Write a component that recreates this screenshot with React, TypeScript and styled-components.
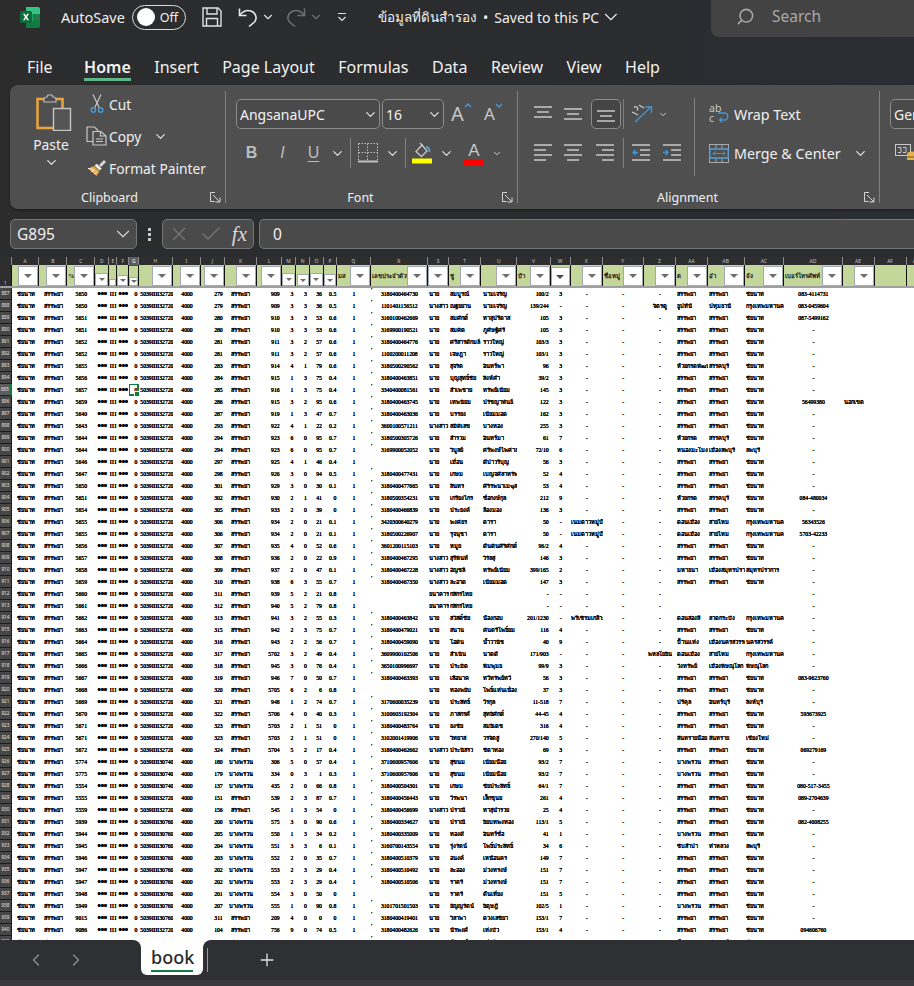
import React from 'react';
import styled, { createGlobalStyle } from 'styled-components';
import { ChevronDown, ChevronLeft, ChevronRight, Plus, Search, X, Check } from 'lucide-react';

const GlobalStyle = createGlobalStyle`
  html, body { margin: 0; padding: 0; background: #2b2c2e; }
  * { box-sizing: border-box; }
`;

const UI_FONT = '"Noto Sans", "Open Sans", sans-serif';
const SHEET_FONT = '"Liberation Serif", "Noto Sans", serif';

const Window = styled.div`
  width: 914px;
  height: 986px;
  display: flex;
  flex-direction: column;
  overflow: hidden;
  font-family: ${UI_FONT};
  color: #f0f0f0;
  background: linear-gradient(90deg, #2c2c2d 0%, #2b2c2f 60%, #2a2d34 100%);
`;

/* title bar */
const TitleBar = styled.div`
  height: 37px;
  flex: none;
  display: flex;
  align-items: center;
  padding: 0 0 3px 20px;
`;

const AutoSave = styled.span`
  margin-left: 21px;
  font-size: 14.5px;
  width: 71px;
`;

const Toggle = styled.div`
  width: 54px;
  height: 25px;
  border: 1.5px solid #d8d8d8;
  border-radius: 13px;
  display: flex;
  align-items: center;
  padding: 0 7px 0 4px;
  justify-content: space-between;
  font-size: 12.5px;
  margin-right: 16px;
  &::before {
    content: '';
    width: 18px;
    height: 18px;
    border-radius: 50%;
    background: #fff;
  }
`;

const QatIcon = styled.div<{ $gap: number }>`
  display: flex;
  margin-right: ${(p) => p.$gap}px;
`;

const DocTitle = styled.div`
  display: flex;
  align-items: center;
  font-size: 14px;
  width: 244px;
  white-space: nowrap;
`;

const DocName = styled.span`
  font-size: 13.5px;
  margin-right: 6px;
`;

const DocSaved = styled.span`
  margin: 0 1px 0 6px;
`;

const SearchBox = styled.div`
  margin: 0 0 -3px 89px;
  flex: 1;
  align-self: stretch;
  background: #434343;
  border-bottom-left-radius: 8px;
  display: flex;
  align-items: center;
  padding: 0 0 5px 25px;
  gap: 17px;
  color: #a8a8a8;
  font-size: 15.5px;
`;

const SearchGlyph = styled(Search)`
  transform: scaleX(-1);
`;

/* ribbon tabs */
const TabStrip = styled.div`
  height: 48px;
  flex: none;
  display: flex;
  align-items: flex-start;
  padding: 18px 0 0 27px;
  gap: 23.5px;
`;

const TabLabel = styled.div<{ $active?: boolean; $after?: number }>`
  position: relative;
  font-size: 16px;
  line-height: 24px;
  font-weight: ${(p) => (p.$active ? 600 : 400)};
  color: #f2f2f2;
  white-space: nowrap;
  margin-right: ${(p) => p.$after ?? 0}px;
  ${(p) => p.$active && `
    &::after {
      content: '';
      position: absolute;
      left: 0;
      right: 0;
      top: 23px;
      height: 2.5px;
      background: #5fb585;
    }
  `}
`;

/* ribbon */
const Ribbon = styled.div`
  height: 124px;
  flex: none;
  margin-left: 10px;
  background: #4f4f4f;
  border-radius: 8px 0 0 8px;
  box-shadow: 0 1px 3px rgba(0, 0, 0, 0.4);
  display: flex;
  overflow: hidden;
  padding: 6px 0 6px;
`;

const Group = styled.div<{ $w: number; $pad: number }>`
  width: ${(p) => p.$w}px;
  flex: none;
  display: flex;
  flex-direction: column;
  padding-left: ${(p) => p.$pad}px;
  border-right: 1px solid #808080;
`;

const GroupBody = styled.div`
  flex: 1;
  min-height: 0;
  display: flex;
`;

const GroupFooter = styled.div<{ $pad: number }>`
  height: 14px;
  margin-left: ${(p) => -p.$pad}px;
  display: grid;
  grid-template-columns: 1fr auto 1fr 18px;
  align-items: center;
  font-size: 12.5px;
  color: #f0f0f0;
  padding-right: 4px;
`;

const Launcher = styled.svg`
  justify-self: end;
  width: 11px;
  height: 11px;
  grid-column: 4;
`;

const GroupName = styled.span`
  grid-column: 2;
`;

const PasteColumn = styled.div`
  width: 58px;
  margin-left: 12px;
  display: flex;
  flex-direction: column;
  align-items: center;
  padding-top: 2px;
  font-size: 13.8px;
  & > svg:first-child {
    margin-left: 5px;
  }
`;

const PasteLabel = styled.span`
  margin-top: 4px;
  line-height: 20px;
`;

const ClipboardList = styled.div`
  display: flex;
  flex-direction: column;
  margin: -3px 0 0 4px;
`;

const ClipRow = styled.div`
  height: 32px;
  display: flex;
  align-items: center;
  font-size: 13.8px;
  white-space: nowrap;
`;

const ClipIcon = styled.div`
  width: 25px;
  display: flex;
  justify-content: center;
`;

const ChevGap = styled.span`
  width: 12px;
`;

const Stack = styled.div`
  display: flex;
  flex-direction: column;
  padding-top: 8px;
  gap: 9px;
`;

const ToolRow = styled.div<{ $ml?: number }>`
  height: 30px;
  display: flex;
  align-items: center;
  margin-left: ${(p) => p.$ml ?? 0}px;
`;

const SelectBox = styled.div<{ $w: number; $ml?: number }>`
  width: ${(p) => p.$w}px;
  margin-left: ${(p) => p.$ml ?? 0}px;
  height: 30px;
  flex: none;
  border: 1px solid #8c8c8c;
  border-radius: 5px;
  background: #4a4a4a;
  display: flex;
  align-items: center;
  justify-content: space-between;
  padding: 0 1px 0 3px;
  font-size: 14px;
  color: #f2f2f2;
`;

const GrowFont = styled.div<{ $ml: number; $size: number }>`
  margin-left: ${(p) => p.$ml}px;
  width: 24px;
  display: flex;
  align-items: flex-start;
  font-size: ${(p) => p.$size}px;
  line-height: 22px;
  color: #c8c8c8;
`;

const IconSlot = styled.div<{ $w: number; $boxed?: boolean; $ml?: number }>`
  width: ${(p) => p.$w}px;
  margin-left: ${(p) => p.$ml ?? 0}px;
  height: 30px;
  flex: none;
  display: flex;
  align-items: center;
  justify-content: center;
  ${(p) => p.$boxed && `
    border: 1px solid #8c8c8c;
    border-radius: 5px;
    background: #454545;
  `}
`;

const FontLetter = styled.span<{ $style?: string }>`
  font-family: "Liberation Sans", sans-serif;
  font-size: 16px;
  color: #bdbdbd;
  font-weight: ${(p) => (p.$style === 'b' ? 700 : 400)};
  font-style: ${(p) => (p.$style === 'i' ? 'italic' : 'normal')};
  text-decoration: ${(p) => (p.$style === 'u' ? 'underline' : 'none')};
  text-underline-offset: 3px;
`;

const ToolDivider = styled.div`
  width: 1px;
  height: 30px;
  background: #808080;
  flex: none;
`;

const ColorLetter = styled.div<{ $color: string }>`
  width: 20px;
  height: 24px;
  display: flex;
  flex-direction: column;
  align-items: center;
  justify-content: flex-end;
  font-family: "Liberation Sans", sans-serif;
  font-size: 17px;
  line-height: 18px;
  color: #c8c8c8;
  border-bottom: 5px solid ${(p) => p.$color};
`;

const BigDivider = styled.div`
  width: 1px;
  height: 78px;
  margin: 7px 0 0 6px;
  background: #808080;
`;

const TextAction = styled.div`
  height: 30px;
  width: 170px;
  margin-left: 12px;
  display: flex;
  align-items: center;
  font-size: 14.3px;
  white-space: nowrap;
`;

const ActionIcon = styled.div`
  width: 27px;
  display: flex;
  padding-left: 2px;
  justify-content: flex-start;
`;

/* formula bar */
const FormulaRow = styled.div`
  height: 30px;
  flex: none;
  margin-top: 10px;
  padding-left: 10px;
  display: flex;
  align-items: stretch;
  font-size: 15.5px;
`;

const NameBox = styled.div`
  width: 127px;
  border: 1px solid #757575;
  border-radius: 5px;
  background: #4a4a4a;
  display: flex;
  align-items: center;
  justify-content: space-between;
  padding: 0 2px 0 6px;
  flex: none;
`;

const GripDots = styled.div`
  width: 25px;
  flex: none;
  display: flex;
  flex-direction: column;
  align-items: center;
  justify-content: center;
  gap: 2px;
  & > i {
    width: 3px;
    height: 3px;
    background: #c8c8c8;
  }
`;

const FxBox = styled.div`
  width: 92px;
  flex: none;
  border: 1px solid #757575;
  border-radius: 5px;
  background: #4a4a4a;
  display: flex;
  align-items: center;
  padding: 0 6px 0 5px;
  justify-content: space-between;
`;

const FxText = styled.span`
  font-family: "Liberation Serif", serif;
  font-style: italic;
  font-size: 21px;
  color: #d8d8d8;
`;

const FormulaInput = styled.div`
  flex: 1;
  margin-left: 5px;
  border: 1px solid #757575;
  border-right: 0;
  border-radius: 5px 0 0 5px;
  background: #4a4a4a;
  display: flex;
  align-items: center;
  padding-left: 13px;
`;

/* sheet */
const Sheet = styled.div`
  flex: 1;
  min-height: 0;
  padding-top: 8px;
  overflow: hidden;
  background: linear-gradient(#2b2c2f 8px, #fff 8px);
`;

const COLUMNS: { id: string; w: number; align: 'left' | 'center' | 'right'; pad?: number }[] = [
  { id: 'A', w: 27.6, align: 'left', pad: 5 },
  { id: 'B', w: 28, align: 'center' },
  { id: 'C', w: 28, align: 'center' },
  { id: 'D', w: 14, align: 'center' },
  { id: 'E', w: 8, align: 'center' },
  { id: 'F', w: 12, align: 'center' },
  { id: 'G', w: 10, align: 'right', pad: 2 },
  { id: 'H', w: 33.4, align: 'left', pad: 1 },
  { id: 'I', w: 28.6, align: 'center' },
  { id: 'J', w: 23.4, align: 'right', pad: 2 },
  { id: 'K', w: 32.6, align: 'center' },
  { id: 'L', w: 24.4, align: 'right', pad: 2 },
  { id: 'M', w: 14.6, align: 'right', pad: 3 },
  { id: 'N', w: 13.7, align: 'right', pad: 3 },
  { id: 'O', w: 14, align: 'right', pad: 2 },
  { id: 'P', w: 13.3, align: 'right', pad: 1 },
  { id: 'Q', w: 33.4, align: 'center' },
  { id: 'R', w: 57.6, align: 'center' },
  { id: 'S', w: 21, align: 'left', pad: 1 },
  { id: 'T', w: 32, align: 'left', pad: 1 },
  { id: 'U', w: 36, align: 'left', pad: 2 },
  { id: 'V', w: 33.4, align: 'right', pad: 2 },
  { id: 'W', w: 20, align: 'center' },
  { id: 'X', w: 32, align: 'center' },
  { id: 'Y', w: 41.3, align: 'center' },
  { id: 'Z', w: 32, align: 'center' },
  { id: 'AA', w: 32, align: 'left', pad: 1 },
  { id: 'AB', w: 36.7, align: 'left', pad: 1 },
  { id: 'AC', w: 39.6, align: 'left', pad: 1 },
  { id: 'AD', w: 58.4, align: 'center' },
  { id: 'AE', w: 32, align: 'left', pad: 1 },
  { id: 'AF', w: 32, align: 'left' },
  { id: 'AG', w: 20, align: 'left' },
];

const GRID = `11.7px ${COLUMNS.map((c) => `${c.w}px`).join(' ')}`;

const LetterRow = styled.div`
  display: grid;
  grid-template-columns: ${GRID};
  height: 8px;
  background: #2e2e2e;
  font-family: ${UI_FONT};
`;

const Letter = styled.div<{ $active?: boolean }>`
  font-size: 5px;
  line-height: 8px;
  text-align: center;
  color: ${(p) => (p.$active ? '#fff' : '#c4c4c4')};
  background: ${(p) => (p.$active ? '#5c5c5c' : 'transparent')};
  border-right: 1px solid #8a8a8a;
  border-bottom: ${(p) => (p.$active ? '1.5px solid #107c41' : '0')};
`;

const FilterRow = styled.div`
  display: grid;
  grid-template-columns: ${GRID};
  height: 23px;
  background: #c4d79b;
  border-bottom: 2px solid #a0a0a0;
`;

const Corner = styled.div`
  background: #2e2e2e;
  color: #ddd;
  font-size: 4.5px;
  font-family: ${UI_FONT};
  display: flex;
  align-items: flex-end;
  justify-content: center;
  border-right: 1px solid #111;
`;

const FilterCell = styled.div`
  position: relative;
  display: flex;
  align-items: flex-end;
  justify-content: flex-end;
  overflow: hidden;
  border-right: 1px solid #111;
`;

const FilterLabel = styled.span`
  flex: 1;
  align-self: center;
  font-family: ${SHEET_FONT};
  font-size: 6px;
  font-weight: 700;
  color: #111;
  white-space: nowrap;
  overflow: hidden;
  padding-left: 1px;
`;

const FilterButton = styled.div<{ $size: number; $dark?: boolean }>`
  width: ${(p) => p.$size}px;
  height: ${(p) => p.$size}px;
  flex: none;
  background: #fdfdfd;
  border: 1.5px solid #a4a9b0;
  display: flex;
  align-items: center;
  justify-content: center;
  &::before {
    content: '';
    display: ${(p) => (p.$size < 9 ? 'none' : 'block')};
    border-left: ${(p) => (p.$size > 16 ? 4.5 : 3.5)}px solid transparent;
    border-right: ${(p) => (p.$size > 16 ? 4.5 : 3.5)}px solid transparent;
    border-top: ${(p) => (p.$size > 16 ? 4 : 3)}px solid ${(p) => (p.$dark ? '#4a4a4a' : '#6d6d6d')};
  }
`;

const DataRow = styled.div`
  display: grid;
  grid-template-columns: ${GRID};
  height: 12px;
  background: #fff;
`;

const RowHeader = styled.div<{ $active?: boolean }>`
  background: ${(p) => (p.$active ? '#5c5c5c' : '#474747')};
  color: #e8e8e8;
  font-family: ${UI_FONT};
  font-size: 4.6px;
  line-height: 11px;
  text-align: center;
  border-bottom: 1px solid #1c1c1c;
  border-right: ${(p) => (p.$active ? '2px solid #107c41' : '1px solid #1c1c1c')};
`;

const Cell = styled.div<{ $align: string; $pad: number; $warn?: boolean; $mask?: boolean; $spaced?: boolean }>`
  position: relative;
  text-align: ${(p) => p.$align};
  padding: 0 ${(p) => (p.$align === 'right' ? p.$pad : 0)}px 0 ${(p) => (p.$align === 'left' ? p.$pad : 0)}px;
  font-family: ${SHEET_FONT};
  font-size: ${(p) => (p.$mask ? 9.5 : 5.7)}px;
  font-weight: ${(p) => (p.$mask ? 700 : 400)};
  letter-spacing: ${(p) => (p.$spaced ? 0.5 : p.$mask ? -0.2 : 0)}px;
  line-height: 12px;
  color: #000;
  white-space: nowrap;
  overflow: ${(p) => (p.$warn ? 'visible' : 'hidden')};
  text-shadow: 0 0 0.5px #000, 0 0 0.5px #000;
  ${(p) => p.$warn && `
    &::before {
      content: '';
      position: absolute;
      left: 0.5px;
      top: 0;
      border-top: 2.5px solid #107c41;
      border-right: 2.5px solid transparent;
    }
  `}
`;

const Selection = styled.div`
  position: absolute;
  inset: -1px 0 0 -1px;
  border: 2px solid #107c41;
  &::after {
    content: '';
    position: absolute;
    right: -3px;
    bottom: -3px;
    width: 5px;
    height: 5px;
    background: #107c41;
    border: 1px solid #fff;
    border-width: 1px 0 0 1px;
  }
`;

/* sheet tabs */
const SheetBar = styled.div`
  height: 40px;
  flex: none;
  display: flex;
  background: linear-gradient(#fff 50%, #2f3033 50%);
`;

const BarLeft = styled.div`
  width: 141px;
  flex: none;
  background: #2f3033;
  border-top-right-radius: 8px;
  display: flex;
  align-items: center;
  padding-left: 26px;
  gap: 20px;
  color: #8f8f8f;
`;

const SheetTab = styled.div`
  width: 62px;
  flex: none;
  background: #fff;
  height: 35px;
  border-radius: 0 0 6px 6px;
  padding: 5px 10px 0;
  color: #2b2b2b;
  font-size: 18px;
  font-weight: 500;
  line-height: 24px;
  text-align: center;
  & > span {
    display: block;
    border-bottom: 2.5px solid #107c41;
    padding-bottom: 1px;
  }
`;

const BarRight = styled.div`
  flex: 1;
  background: #2f3033;
  border-top-left-radius: 8px;
  display: flex;
  align-items: center;
  padding-left: 4px;
`;

const TabSeparator = styled.div`
  width: 1px;
  height: 24px;
  background: #9a9a9a;
  margin-right: 49px;
`;

const StatusStrip = styled.div`
  height: 6px;
  flex: none;
  background: #3a3a3a;
`;

/* icons */
const Chev = ({ size = 15, color = '#e0e0e0' }: { size?: number; color?: string }) => (
  <ChevronDown size={size} color={color} strokeWidth={2} />
);

const ExcelLogo = () => (
  <svg width="20" height="21" viewBox="0 0 20 21">
    <path d="M6 0h12a2 2 0 0 1 2 2v5H6z" fill="#33c481" />
    <path d="M6 7h14v7H6z" fill="#21a366" />
    <path d="M6 14h14v5a2 2 0 0 1-2 2H6z" fill="#107c41" />
    <path d="M13 7h7v7h-7z" fill="#185c37" opacity="0.55" />
    <rect x="0" y="4" width="12" height="12" rx="1.5" fill="#0f6a3a" />
    <path d="M3 6.8h1.9L6 9l1.2-2.2H9L7 10l2 3.2H7.1L6 11l-1.2 2.2H3L5 10z" fill="#fff" />
  </svg>
);

const SaveIcon = () => (
  <svg width="20" height="20" viewBox="0 0 20 20" fill="none" stroke="#e0e0e0" strokeWidth="1.4">
    <path d="M1 1h15l3 3v15H1z" />
    <path d="M5 1v6h10V1M4.5 19v-7.5h11V19" />
  </svg>
);

const UndoIcon = ({ color }: { color: string }) => (
  <svg width="20" height="20" viewBox="0 0 20 20" fill="none" stroke={color} strokeWidth="1.6">
    <path d="M1.5 1.5v7h7" />
    <path d="M1.5 8.5C5 4 9 2.8 13 4c5 1.8 6.5 7.5 3.5 11L11 19.5" />
  </svg>
);

const RedoIcon = ({ color }: { color: string }) => (
  <svg width="20" height="20" viewBox="0 0 20 20" fill="none" stroke={color} strokeWidth="1.6">
    <path d="M18.5 1.5v7h-7" />
    <path d="M18.5 8.5C15 4 11 2.8 7 4 2 5.8.5 11.5 3.5 15L9 19.5" />
  </svg>
);

const QatMore = () => (
  <svg width="10" height="10" viewBox="0 0 10 10" fill="none" stroke="#e0e0e0" strokeWidth="1.2">
    <path d="M1 1.5h8M1.500 5L5 8.500 8.500 5" />
  </svg>
);

const PasteIcon = () => (
  <svg width="36" height="38" viewBox="0 0 36 38" fill="none">
    <rect x="1.500" y="6" width="25" height="29" stroke="#e8a33d" strokeWidth="2.6" fill="#4f4f4f" />
    <path d="M8 6c0-2 2-2 3-2 0-3 6-3 6 0 1 0 3 0 3 2v3H8z" fill="#4f4f4f" stroke="#bdbdbd" strokeWidth="1.2" />
    <rect x="17.500" y="15.500" width="17" height="22" fill="#555" stroke="#c6c6c6" strokeWidth="1.4" />
  </svg>
);

const CutIcon = () => (
  <svg width="14" height="20" viewBox="0 0 14 20" fill="none">
    <path d="M3 0.5l6.2 13M11 0.5L4.8 13.5" stroke="#cfcfcf" strokeWidth="1.1" />
    <circle cx="3.3" cy="16" r="2.2" stroke="#4a9bd6" strokeWidth="1.4" />
    <circle cx="10.7" cy="16" r="2.2" stroke="#4a9bd6" strokeWidth="1.4" />
  </svg>
);

const CopyIcon = () => (
  <svg width="21" height="20" viewBox="0 0 21 20" fill="none" stroke="#c8c8c8" strokeWidth="1.2">
    <path d="M9 15.500H1V1h7.500l3.500 3.500V6" />
    <path d="M7 5.500h8l5 4.500V19H7z" fill="#4f4f4f" />
    <path d="M14.500 5.500V10H20M10 13h7M10 15.500h7" />
  </svg>
);

const PainterIcon = () => (
  <svg width="20" height="19" viewBox="0 0 20 19" fill="none">
    <path d="M1 9.500L9.500 17l3-4.500L7 7z" fill="#e8a33d" />
    <path d="M1 9.500l6 1M4 12.500l4-1M7 15l3-2" stroke="#fff" strokeWidth="0.9" />
    <path d="M7.500 6.500l5 5 2.200-1.800-4.800-5z" fill="#f0f0f0" />
    <path d="M12 6l5-5 2 2-5 5z" fill="#d8d8d8" />
  </svg>
);

const LauncherIcon = () => (
  <Launcher viewBox="0 0 11 11" fill="none" stroke="#d8d8d8" strokeWidth="1">
    <path d="M5 .5H.5v4" />
    <path d="M.5 4.500v5h4" />
    <path d="M3 3l7 7M10 5.500V10H5.500" />
  </Launcher>
);

const BordersIcon = () => (
  <svg width="20" height="20" viewBox="0 0 20 20" fill="none" stroke="#c0c0c0">
    <path d="M.5.5h19M.5 9.500h19M.5.5v18M9.500.5v18M19.500.5v18" strokeDasharray="1.5 1.5" />
    <path d="M0 18.500h20" strokeWidth="2" />
  </svg>
);

const FillIcon = () => (
  <svg width="20" height="22" viewBox="0 0 20 22">
    <path d="M4 9.500L10 3l5 6-5.500 5.500z" fill="none" stroke="#c8c8c8" strokeWidth="1.3" />
    <path d="M8 1l3 3" stroke="#c8c8c8" strokeWidth="1.3" />
    <path d="M14 5c3 0 3.500 2 3.500 5" stroke="#5ba4d6" strokeWidth="1.8" fill="none" />
    <rect x="0" y="16.500" width="20" height="5" fill="#ffff00" />
  </svg>
);

const Lines = ({ align }: { align: 'l' | 'c' | 'r' }) => {
  const xs = (w: number) => (align === 'l' ? 0 : align === 'r' ? 18 - w : (18 - w) / 2);
  return (
    <svg width="18" height="18" viewBox="0 0 18 18" stroke="#c8c8c8" strokeWidth="1.4">
      {[18, 12, 18, 12].map((w, i) => (
        <path key={i} d={`M${xs(w)} ${1 + i * 5}h${w}`} />
      ))}
    </svg>
  );
};

const VAlign = ({ top }: { top: number }) => (
  <svg width="18" height="16" viewBox="0 0 18 16" stroke="#c8c8c8" strokeWidth="1.4">
    <path d={`M0 ${top + 1}h18M3 ${top + 6}h12M0 ${top + 11}h18`} />
  </svg>
);

const Orientation = () => (
  <svg width="22" height="20" viewBox="0 0 22 20" fill="none">
    <path d="M4 18L20 3M14 3h6.500v6" stroke="#3f96d8" strokeWidth="1.3" />
    <path d="M1 8l6 3M3 3.500c2-2 5 0 3 3M8 1l5 3" stroke="#d0d0d0" strokeWidth="1.1" />
  </svg>
);

const Indent = ({ dir }: { dir: 'in' | 'out' }) => (
  <svg width="18" height="18" viewBox="0 0 18 18" stroke="#c8c8c8" strokeWidth="1.4" fill="none">
    <path d="M0 1h18M8 6h10M8 11h10M0 16h18" />
    {dir === 'out' ? (
      <path d="M6 8.500H1M3.500 6L1 8.500 3.500 11" stroke="#3f96d8" />
    ) : (
      <path d="M0 8.500h5M2.500 6L5 8.500 2.500 11" stroke="#3f96d8" />
    )}
  </svg>
);

const WrapIcon = () => (
  <svg width="20" height="20" viewBox="0 0 20 20" fill="none">
    <path d="M9 9h6c5 0 5 7 0 7H10.500M13 13.500L10.500 16 13 18.500" stroke="#3f96d8" strokeWidth="1.3" />
    <text x="0" y="8" fontSize="10.500" fill="#c8c8c8" fontFamily="Noto Sans, sans-serif">ab</text>
    <text x="0" y="18" fontSize="10.500" fill="#c8c8c8" fontFamily="Noto Sans, sans-serif">c</text>
  </svg>
);

const MergeIcon = () => (
  <svg width="20" height="19" viewBox="0 0 20 19" fill="none">
    <rect x="0.500" y="0.500" width="19" height="18" stroke="#a8a8a8" />
    <path d="M0 5h20M0 14h20M7 0v5M13 0v5M7 14v5M13 14v5" stroke="#a8a8a8" />
    <rect x="1" y="5" width="18" height="9" stroke="#3f96d8" strokeWidth="1.3" />
    <path d="M4 9.500h12M6 7.500l-2 2 2 2M14 7.500l2 2-2 2" stroke="#3f96d8" />
  </svg>
);

const NumberIcon = () => (
  <svg width="22" height="18" viewBox="0 0 22 18" fill="none">
    <rect x="0.500" y="0.500" width="15" height="11" stroke="#c8c8c8" />
    <path d="M3 3.500h3v5H3M8 3.500h3v5H8" stroke="#c8c8c8" />
    <ellipse cx="17" cy="10" rx="5" ry="2.500" fill="#e8b04a" />
    <rect x="12" y="10" width="10" height="6" fill="#e8b04a" />
    <path d="M12 13h10" stroke="#6d5a2e" />
  </svg>
);

/* data */
const DEFAULTS = { x: '-', y: '-', z: '-', aa: 'สรรพยา', ab: 'สรรพยา', ac: 'ชัยนาท', ad: '-', ae: '' };

// C|รหัส H|J|K|L|M|N|O|P|R|S|T|U|V|W then x|y|z|aa|ab|ac|ad|ae ("" keeps the default, _ means blank)
const RAW = [
  '5650|32720|279|สรรพยา|909|3|3|36|0.5|3180400464730|นาย|สมบูรณ์|นามเจริญ|100/2|3|||||||083-4114731',
  '5650|32720|279|สรรพยา|909|3|3|36|0.5|1101401156512|นางสาว|ณฐธยาน|นามเจริญ|139/244|-|||จิตรดู|ธูปทีนี|ปทุมธานี|กรุงเทพมหานคร|083-0459604',
  '5651|32720|280|สรรพยา|910|3|3|53|0.6|3160100462669|นาย|สมศักดิ์|ทาสุปรีดาส|105|3|||||||087-5499162',
  '5651|32720|280|สรรพยา|910|3|3|53|0.6|3169900190521|นาย|สมคิด|ภูศิษฐ์ศรี|105|3',
  '5652|32720|281|สรรพยา|911|3|2|57|0.6|3180400464776|นาย|ศรีสารดีกมล์|ราวใหญ่|103/3|3',
  '5652|32720|281|สรรพยา|911|3|2|57|0.6|1100200011208|นาย|เจษฎา|ราวใหญ่|103/1|3',
  '5655|32720|283|สรรพยา|914|4|1|79|0.6|3180500290562|นาย|สุจริต|อินทร์พา|96|3||||ห้วยกรดพัฒนา|สรรคบุรี',
  '5656|32720|284|สรรพยา|915|1|3|75|0.4|3180400463851|นาย|บุญสุทธิ์ชัย|สิงห์คำ|39/2|3',
  '5657|32720|285|สรรพยา|916|1|3|75|0.4|3340400081561|นาย|สำเพชาย|ทรัพย์เนียม|145|3',
  '5659|32720|286|สรรพยา|915|3|2|95|0.6|3180400463745|นาย|เทพนิยม|ปรัชญาพันธ์|122|3|||||||56499380|นอกเขต',
  '5640|32720|287|สรรพยา|919|1|3|47|0.7|3180400463036|นาย|บรรยง|เนียมมอด|162|3',
  '5643|32720|293|สรรพยา|922|4|1|22|0.2|3600100571211|นางสาว|สมิติเลข|บางทอง|255|3',
  '5644|32720|294|สรรพยา|923|6|0|95|0.7|3180500305726|นาย|สำรวม|อินทร์มา|61|7||||ห้วยกรด|สรรคบุรี',
  '5644|32720|294|สรรพยา|923|6|0|95|0.7|3169900052052|นาย|วิบูลย์|ศรีพงษ์ไพศาล|72/10|6||||หนองมะโมง|เมืองลพบุรี|ลพบุรี',
  '5646|32720|297|สรรพยา|925|4|1|46|0.4||นาย|เมื่อน|ดีปาวรีบุญ|56|3',
  '5647|32720|298|สรรพยา|926|3|0|94|0.5|3180400477431|นาย|เกษม|เบญจศิลาทรัพย์|52|4',
  '5650|32720|301|สรรพยา|929|3|0|30|0.1|3180400477665|นาย|สินทร|ศิริรพนาเมฆุล|53|4',
  '5651|32720|302|สรรพยา|930|2|1|41|0|3180500354231|นาย|เกรียงไกร|ซื่อกงษ์กุล|212|9||||ห้วยกรด|สรรคบุรี||084-480034',
  '5654|32720|305|สรรพยา|933|2|0|39|0|3180400466839|นาย|ประยงค์|ล้องมอง|136|3',
  '5655|32720|306|สรรพยา|934|2|0|21|0.1|3420300640279|นาย|พงศธร|ดารา|50|-|เนมดาวหมู่บ้าน|||ดอนเมือง|สายไหม|กรุงเทพมหานคร|56343526',
  '5655|32720|306|สรรพยา|934|2|0|21|0.1|3180500226907|นาย|รุจนุชา|ดารา|50|-|เนมดาวหมู่บ้าน|||ดอนเมือง|สายไหม|กรุงเทพมหานคร|5703-42233',
  '5656|32720|307|สรรพยา|935|4|0|52|0.6|3601200115103|นาย|หมูย|ดีนดินศิริศักดิ์|96/2|4',
  '5657|32720|308|สรรพยา|936|2|0|22|0.9|3180400467295|นางสาว|สุรีพินท์|วิรัลสุ|146|3',
  '5658|32720|309|สรรพยา|937|2|0|47|0.1|3180400467228|นางสาว|อัญชลี|ทรัพย์เนียม|399/165|2||||มหาธนา|เมืองสมุทรปรา|สมุทรปราการ',
  '5659|32720|310|สรรพยา|938|6|3|55|0.7|3180400467350|นางสาว|ละอาด|เนียมมอด|147|3',
  '5660|32720|311|สรรพยา|939|5|2|21|0.8||ธนาคาร|กสิกรไทย|_|-|-||||_|_|_',
  '5661|32720|312|สรรพยา|940|5|2|79|0.8||ธนาคาร|กสิกรไทย|_|-|-||||_|_|_',
  '5662|32720|313|สรรพยา|941|3|2|55|0.3|3180400463842|นาย|สวัสดิ์ชัย|น้องกอบ|201/1230|-|พรีเซิรมเกล้า:|||ดอนสองสี|ลาดกระบัง|กรุงเทพมหานคร',
  '5663|32720|315|สรรพยา|942|2|3|75|0.7|3180400479021|นาย|สนาน|คันตรีโพธิ์ยม|116|4',
  '5664|32720|316|สรรพยา|943|2|2|56|0.7|3180400459090|นาย|โอดิน|น้ำวานิช|40|9||||ป้ำนแท่ง|เมืองนครสวรรค์|นครสวรรค์',
  '5665|32720|317|สรรพยา|5702|3|2|49|0.4|3609900102506|นาย|สำเนิน|นาดดี|171/903|-|||พหลโยธิน|ดอนเมือง|สายไหม|กรุงเทพมหานคร',
  '5666|32720|318|สรรพยา|945|3|0|76|0.4|3650100996697|นาย|ประมิด|พิมพุมธ|99/9|3||||วังทรัพย์|เมืองพิษณุโลก|พิษณุโลก',
  '5667|32720|319|สรรพยา|946|7|0|50|0.7|3180400463393|นาย|เสือนาค|ทวีทรัพย์ทวี|56|3|||||||083-9623760',
  '5668|32720|320|สรรพยา|5705|6|2|6|0.8||นาย|ทองพยับ|โพธิ์แท่นเนื่อง|37|3',
  '5669|32720|321|สรรพยา|948|1|2|74|0.7|3170600035239|นาย|ประสิทธิ์|วีรกุล|11-518|7||||ปรีคุล|อินทร์บุรี|สิงห์บุรี',
  '5670|32720|322|สรรพยา|5706|4|0|40|0.3|3100603192304|นาย|ภาสกรศ์|สุทธิศักดิ์|44-45|4|||||||593673925',
  '5671|32720|323|สรรพยา|5703|2|1|51|0|3180400483764|นาย|ธงชัย|สมธิเดช|316|4',
  '5671|32720|323|สรรพยา|5703|2|1|51|0|3102001419906|นาย|วิทยาส|วรจิตสู|270/140|5||||สันทรายน้อย|สันทราย|เชียงใหม่',
  '5672|32720|324|สรรพยา|5704|5|2|17|0.4|3180400462662|นางสาว|ประนิสรว|ชิดาทอง|69|3|||||||069279169',
  '5774|30740|180|บางพรวน|306|5|0|57|0.4|3710600957606|นาย|สุขนม|เนียมน้อย|93/2|7||||บางพรวน',
  '5775|30740|179|บางพรวน|334|0|3|1|0.3|3710600957606|นาย|สุขนม|เนียมน้อย|93/2|7||||บางพรวน',
  '5554|30740|137|บางพรวน|435|2|0|66|0.8|3180400504301|นาย|เกษม|ชัยประสิทธิ์|64/1|7|||||||080-517-3455',
  '5555|32720|151|สรรพยา|539|2|3|87|0.7|3180400456443|นาย|วีรพนา|เล็กชุนย|261|4|||||||089-2704639',
  '5559|32720|156|สรรพยา|545|1|3|54|0|3180400456699|นางสาว|ปราณี|ทาสุนำรวย|25|4',
  '5939|30760|200|บางพรวน|575|3|0|90|0.6|3180400334627|นาย|ปราณี|ธิยบทพงทอง|113/1|5|||||||082-4008255',
  '5944|30760|205|บางพรวน|550|1|3|34|0.2|3180400335009|นาย|ทองดี|อินทร์ชื่อ|41|1||||บางพรวน',
  '5945|30760|204|บางพรวน|551|3|3|6|0.1|3160700143554|นาย|รุ่งรัตน์|โพธิ์ประสิทธิ์|34|6||||ซับสำปา|ท่าหลวง|ลพบุรี',
  '5946|30760|203|บางพรวน|552|2|0|35|0.7|3180400510379|นาย|อนงค์|เหนือนคร|149|7',
  '5947|30760|202|บางพรวน|553|2|3|29|0.4|3180400510492|นาย|ละออง|ม่วงทรงษ์|151|7',
  '5947|30760|202|บางพรวน|553|2|3|29|0.4|3180400510506|นาย|ราตรี|ม่วงทรงษ์|151|7',
  '5948|30760|201|บางพรวน|554|3|0|50|0||นาย|ราตรี|ต้นเที่ยง|151|5',
  '5949|30760|207|บางพรวน|555|1|0|90|0.8|3101701501503|นาย|ธัญญรัตน์|ธิดุษฎี|102/5|1||||บางพรวน',
  '9015|30760|311|สรรพยา|209|4|0|0|0|3180400419401|นาย|วิลาพา|ดวงเลขิยา|153/1|7',
  '9086|32720|104|สรรพยา|756|9|0|74|0.5|3180400482626|นาย|นีรพงศ์|เท่งบัว|153/1|4|||||||094606760',
  '9087|32720|105|สรรพยา|757|9|0|74|0.5|3180400482634|นาย|นีรพงศ์|เท่งบัว|153/1|4||||ห้วยกรด|สรรคบุรี',
];

const rowCells = (line: string): string[] => {
  const p = line.split('|');
  const pick = (i: number, fallback: string) => {
    const v = p[i];
    if (v === '_') return '';
    return v ? v : fallback;
  };
  return [
    'ชัยนาท', 'สรรพยา', p[0], '•••', 'III', '•••', '0', `5039IIII${p[1]}`, '4000', p[2], p[3], p[4],
    p[5], p[6], p[7], p[8], '1', p[9], p[10], p[11], p[12] === '_' ? '' : p[12], p[13], p[14],
    pick(15, DEFAULTS.x), DEFAULTS.y, pick(17, DEFAULTS.z), pick(18, DEFAULTS.aa), pick(19, DEFAULTS.ab),
    pick(20, DEFAULTS.ac), pick(21, DEFAULTS.ad), pick(22, DEFAULTS.ae), '', '',
  ];
};

const HEADER_LABELS: Record<string, string> = {
  C: '%', Q: 'มส', R: 'เลขประจำตัวบัตร', T: 'ชู', V: 'บ้า', Y: 'ชื่อหมู่', AA: 'ต', AB: 'อำ', AC: 'จัง', AD: 'เบอร์โทรศัพท์',
};

const FIRST_ROW = 887;
const ACTIVE_ROW = 895;

const Filters = () => (
  <FilterRow>
    <Corner>1</Corner>
    {COLUMNS.map((c) => (
      <FilterCell key={c.id}>
        {HEADER_LABELS[c.id] && <FilterLabel>{HEADER_LABELS[c.id]}</FilterLabel>}
        {c.id !== 'AF' && c.id !== 'AG' && (
          <FilterButton $size={Math.min(Math.floor(c.w) - 1, 20)} $dark={c.id === 'W'} />
        )}
      </FilterCell>
    ))}
  </FilterRow>
);

const Rows = () => (
  <>
    {RAW.map((line, i) => {
      const num = FIRST_ROW + i;
      const cells = rowCells(line);
      return (
        <DataRow key={num}>
          <RowHeader $active={num === ACTIVE_ROW}>{num}</RowHeader>
          {COLUMNS.map((c, j) => (
            <Cell
              key={c.id}
              $align={c.align}
              $pad={c.pad ?? 0}
              $warn={c.id === 'R' && cells[j] !== ''}
              $mask={c.id === 'D' || c.id === 'F'}
              $spaced={c.id === 'E'}
            >
              {cells[j]}
              {num === ACTIVE_ROW && c.id === 'G' && <Selection />}
            </Cell>
          ))}
        </DataRow>
      );
    })}
  </>
);

const App: React.FC = () => (
  <>
    <GlobalStyle />
    <Window>
      <TitleBar>
        <ExcelLogo />
        <AutoSave>AutoSave</AutoSave>
        <Toggle>Off</Toggle>
        <QatIcon $gap={16}><SaveIcon /></QatIcon>
        <QatIcon $gap={3}><UndoIcon color="#e8e8e8" /></QatIcon>
        <QatIcon $gap={11}><Chev size={14} /></QatIcon>
        <QatIcon $gap={3}><RedoIcon color="#6f6f6f" /></QatIcon>
        <QatIcon $gap={14}><Chev size={14} color="#6f6f6f" /></QatIcon>
        <QatIcon $gap={31}><QatMore /></QatIcon>
        <DocTitle>
          <DocName>ข้อมูลที่ดินสำรอง</DocName>•<DocSaved>Saved to this PC</DocSaved>
          <ChevronDown size={22} color="#e8e8e8" strokeWidth={1.3} />
        </DocTitle>
        <SearchBox>
          <SearchGlyph size={19} color="#a8a8a8" />
          Search
        </SearchBox>
      </TitleBar>

      <TabStrip>
        <TabLabel $after={8}>File</TabLabel>
        <TabLabel $active>Home</TabLabel>
        <TabLabel>Insert</TabLabel>
        <TabLabel>Page Layout</TabLabel>
        <TabLabel>Formulas</TabLabel>
        <TabLabel>Data</TabLabel>
        <TabLabel>Review</TabLabel>
        <TabLabel>View</TabLabel>
        <TabLabel>Help</TabLabel>
      </TabStrip>

      <Ribbon>
        <Group $w={216} $pad={0}>
          <GroupBody>
            <PasteColumn>
              <PasteIcon />
              <PasteLabel>Paste</PasteLabel>
              <Chev />
            </PasteColumn>
            <ClipboardList>
              <ClipRow><ClipIcon><CutIcon /></ClipIcon>Cut</ClipRow>
              <ClipRow>
                <ClipIcon><CopyIcon /></ClipIcon>Copy
                <ChevGap />
                <Chev />
              </ClipRow>
              <ClipRow><ClipIcon><PainterIcon /></ClipIcon>Format Painter</ClipRow>
            </ClipboardList>
          </GroupBody>
          <GroupFooter $pad={-6}>
            <GroupName>Clipboard</GroupName>
            <LauncherIcon />
          </GroupFooter>
        </Group>

        <Group $w={292} $pad={10}>
          <GroupBody>
            <Stack>
              <ToolRow>
                <SelectBox $w={144}>AngsanaUPC<Chev /></SelectBox>
                <SelectBox $w={62} $ml={2}>16<Chev /></SelectBox>
                <GrowFont $ml={7} $size={20}>A<svg width="8" height="6" viewBox="0 0 8 6" fill="none" stroke="#4a9bd6" strokeWidth="1.3"><path d="M1 4l3-3 3 3" /></svg></GrowFont>
                <GrowFont $ml={9} $size={17}>A<svg width="8" height="6" viewBox="0 0 8 6" fill="none" stroke="#4a9bd6" strokeWidth="1.3"><path d="M1 1l3 3 3-3" /></svg></GrowFont>
              </ToolRow>
              <ToolRow>
                <IconSlot $w={31}><FontLetter $style="b">B</FontLetter></IconSlot>
                <IconSlot $w={31}><FontLetter $style="i">I</FontLetter></IconSlot>
                <IconSlot $w={31}><FontLetter $style="u">U</FontLetter></IconSlot>
                <IconSlot $w={17}><Chev /></IconSlot>
                <IconSlot $w={8}><ToolDivider /></IconSlot>
                <IconSlot $w={28}><BordersIcon /></IconSlot>
                <IconSlot $w={20}><Chev /></IconSlot>
                <IconSlot $w={6}><ToolDivider /></IconSlot>
                <IconSlot $w={28}><FillIcon /></IconSlot>
                <IconSlot $w={20}><Chev /></IconSlot>
                <IconSlot $w={36}><ColorLetter $color="#ff0000">A</ColorLetter></IconSlot>
                <IconSlot $w={10}><Chev /></IconSlot>
              </ToolRow>
            </Stack>
          </GroupBody>
          <GroupFooter $pad={10}>
            <GroupName>Font</GroupName>
            <LauncherIcon />
          </GroupFooter>
        </Group>

        <Group $w={362} $pad={11}>
          <GroupBody>
            <Stack>
              <ToolRow>
                <IconSlot $w={28}><VAlign top={0} /></IconSlot>
                <IconSlot $w={32}><VAlign top={2} /></IconSlot>
                <IconSlot $w={30} $ml={2} $boxed><VAlign top={4} /></IconSlot>
                <IconSlot $w={5}><ToolDivider /></IconSlot>
                <IconSlot $w={32}><Orientation /></IconSlot>
                <IconSlot $w={10}><Chev /></IconSlot>
              </ToolRow>
              <ToolRow>
                <IconSlot $w={28}><Lines align="l" /></IconSlot>
                <IconSlot $w={32}><Lines align="c" /></IconSlot>
                <IconSlot $w={32}><Lines align="r" /></IconSlot>
                <IconSlot $w={5}><ToolDivider /></IconSlot>
                <IconSlot $w={30}><Indent dir="out" /></IconSlot>
                <IconSlot $w={32}><Indent dir="in" /></IconSlot>
              </ToolRow>
            </Stack>
            <BigDivider />
            <Stack>
              <TextAction><ActionIcon><WrapIcon /></ActionIcon>Wrap Text</TextAction>
              <TextAction>
                <ActionIcon><MergeIcon /></ActionIcon>Merge &amp; Center
                <ChevGap />
                <Chev />
              </TextAction>
            </Stack>
          </GroupBody>
          <GroupFooter $pad={11}>
            <GroupName>Alignment</GroupName>
            <LauncherIcon />
          </GroupFooter>
        </Group>

        <Group $w={100} $pad={10}>
          <GroupBody>
            <Stack>
              <SelectBox $w={90}>General</SelectBox>
              <ToolRow $ml={5}><NumberIcon /></ToolRow>
            </Stack>
          </GroupBody>
        </Group>
      </Ribbon>

      <FormulaRow>
        <NameBox>G895<ChevronDown size={22} color="#d0d0d0" strokeWidth={1.3} /></NameBox>
        <GripDots><i /><i /><i /></GripDots>
        <FxBox>
          <X size={22} color="#777" strokeWidth={1.3} />
          <Check size={24} color="#777" strokeWidth={1.3} />
          <FxText>fx</FxText>
        </FxBox>
        <FormulaInput>0</FormulaInput>
      </FormulaRow>

      <Sheet>
        <LetterRow>
          <Letter />
          {COLUMNS.map((c) => (
            <Letter key={c.id} $active={c.id === 'G'}>{c.id}</Letter>
          ))}
        </LetterRow>
        <Filters />
        <Rows />
      </Sheet>

      <SheetBar>
        <BarLeft>
          <ChevronLeft size={20} strokeWidth={1.6} />
          <ChevronRight size={20} strokeWidth={1.6} />
        </BarLeft>
        <SheetTab><span>book</span></SheetTab>
        <BarRight>
          <TabSeparator />
          <Plus size={20} color="#e0e0e0" strokeWidth={1.6} />
        </BarRight>
      </SheetBar>
      <StatusStrip />
    </Window>
  </>
);

export default App;
